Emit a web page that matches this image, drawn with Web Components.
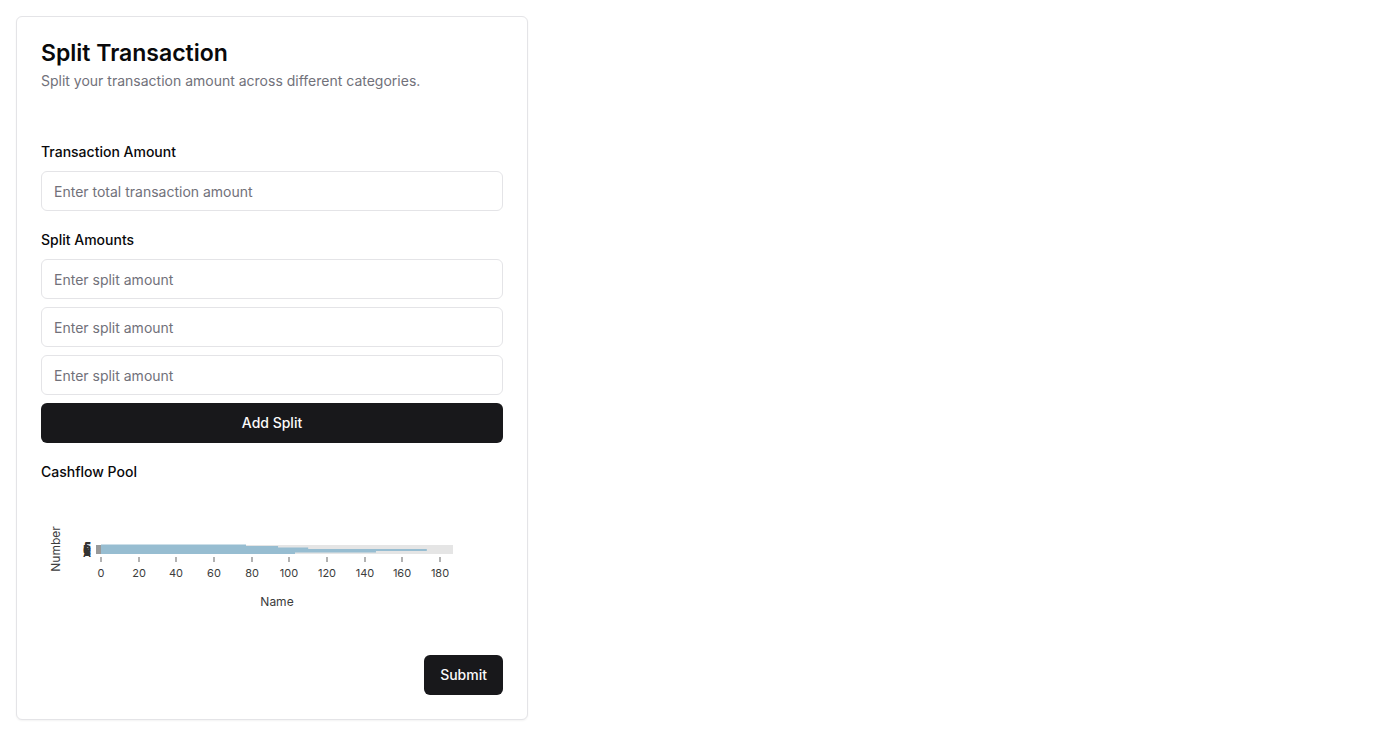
<!DOCTYPE html>
<html lang="en">
<head>
<meta charset="utf-8">
<meta name="viewport" content="width=device-width, initial-scale=1">
<title>Split Transaction</title>
<style>
body { margin: 0; padding: 16px; background: #fff; color: #09090b; font-family: Inter, sans-serif; font-size: 14px; line-height: 20px; }
</style>
</head>
<body>
<split-page></split-page>
<script>
const define = (name, html, setup) => customElements.define(name, class extends HTMLElement {
  constructor() {
    super();
    this.attachShadow({ mode: 'open' });
  }
  connectedCallback() {
    if (this.shadowRoot.childNodes.length) return;
    const t = document.createElement('template');
    t.innerHTML = '<style>*{box-sizing:border-box}</style>' + html;
    this.shadowRoot.append(t.content.cloneNode(true));
    if (setup) setup(this, this.shadowRoot);
  }
});

define('ui-card', `
<style>
:host { display: block; box-sizing: border-box; max-width: 512px; padding: 24px; border: 1px solid #e4e4e7; border-radius: 6px; background: #fff; box-shadow: 0 1px 2px rgba(0,0,0,.05); }
header { display: flex; flex-direction: column; gap: 6px; margin-bottom: 50px; }
</style>
<header><slot name="title"></slot><slot name="description"></slot></header>
<slot></slot>`);

define('ui-input', `
<style>
:host { display: flex; flex-direction: column; gap: 8px; }
label { font-weight: 500; line-height: 22px; }
input { width: 100%; height: 40px; padding: 8px 12px; border: 1px solid #e4e4e7; border-radius: 6px; background: #fff; color: inherit; font: inherit; }
input::placeholder { color: #71717a; opacity: 1; }
input:focus-visible { outline: 2px solid #18181b; outline-offset: 2px; }
</style>
<label for="field"></label><input id="field" type="text" inputmode="decimal">`, (host, root) => {
  const label = root.querySelector('label');
  const input = root.querySelector('input');
  input.placeholder = host.getAttribute('placeholder');
  if (host.hasAttribute('label')) label.textContent = host.getAttribute('label');
  else { label.remove(); input.setAttribute('aria-label', host.getAttribute('name')); }
});

define('ui-button', `
<style>
:host { display: block; }
button { width: 100%; height: 40px; padding: 8px 16px; border: 0; border-radius: 6px; background: #18181b; color: #fafafa; font: inherit; font-weight: 500; cursor: pointer; }
button:hover { background: #2f2f32; }
</style>
<button type="button"><slot></slot></button>`);

define('bar-chart', `
<style>
:host { display: block; }
svg { display: block; width: 100%; height: auto; font-family: inherit; fill: #3c3c3c; }
.tick { font-size: 11px; text-anchor: middle; }
.legend { font-size: 12px; text-anchor: middle; }
.cat { font-size: 11px; font-weight: 600; text-anchor: end; fill: #333; }
</style>
<svg viewBox="0 0 462 146" role="img" aria-label="Cashflow Pool">
<rect x="55" y="54" width="357" height="9" fill="#e5e5e5"/>
<rect x="55" y="54" width="5" height="9" fill="#999"/>
<g id="bars" fill="#97bdd1"></g>
<g id="ticks"></g>
<g id="cats"></g>
<text class="legend" x="236" y="115">Name</text>
<text class="legend" transform="translate(19 58) rotate(-90)">Number</text>
</svg>`, (host, root) => {
  const values = [['F', 77], ['E', 94], ['D', 110], ['C', 173], ['B', 146], ['A', 103]];
  const scale = 339 / 180;
  root.querySelector('#bars').innerHTML = values.map(([, v], i) =>
    `<rect x="60" y="${53.5 + i * 1.5}" width="${v * scale}" height="2"/>`).join('');
  root.querySelector('#cats').innerHTML = values.map(([n], i) =>
    `<text class="cat" x="50" y="${58.5 + i * 1.5}">${n}</text>`).join('');
  root.querySelector('#ticks').innerHTML = [...Array(10).keys()].map(i => {
    const x = Math.round(60 + i * 20 * scale);
    return `<path d="M${x} 66v5" stroke="#999" stroke-width="1.5"/><text class="tick" x="${x}" y="86">${i * 20}</text>`;
  }).join('');
});

define('split-page', `
<style>
:host { display: block; }
h1, h2, p { margin: 0; }
h1 { font-size: 23px; line-height: 24px; font-weight: 600; }
p { color: #71717a; }
h2 { font-size: 14px; line-height: 22px; font-weight: 500; }
form { display: flex; flex-direction: column; gap: 18px; }
.stack { display: flex; flex-direction: column; gap: 8px; }
.actions { display: flex; justify-content: flex-end; }
</style>
<ui-card>
<h1 slot="title">Split Transaction</h1>
<p slot="description">Split your transaction amount across different categories.</p>
<form>
<ui-input label="Transaction Amount" placeholder="Enter total transaction amount"></ui-input>
<div class="stack">
<ui-input label="Split Amounts" placeholder="Enter split amount"></ui-input>
<ui-input name="Second split amount" placeholder="Enter split amount"></ui-input>
<ui-input name="Third split amount" placeholder="Enter split amount"></ui-input>
<ui-button>Add Split</ui-button>
</div>
<section class="stack"><h2>Cashflow Pool</h2><bar-chart></bar-chart></section>
<div class="actions"><ui-button>Submit</ui-button></div>
</form>
</ui-card>`);
</script>
</body>
</html>
